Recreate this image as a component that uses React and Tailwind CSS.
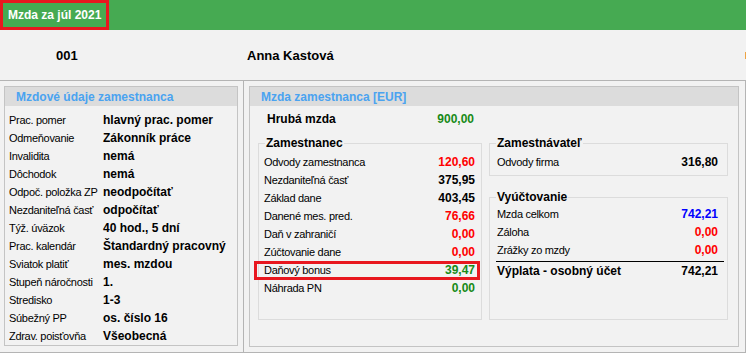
const leftRows = [
  ['Prac. pomer', 'hlavný prac. pomer'],
  ['Odmeňovanie', 'Zákonník práce'],
  ['Invalidita', 'nemá'],
  ['Dôchodok', 'nemá'],
  ['Odpoč. položka ZP', 'neodpočítať'],
  ['Nezdaniteľná časť', 'odpočítať'],
  ['Týž. úväzok', '40 hod., 5 dní'],
  ['Prac. kalendár', 'Štandardný pracovný'],
  ['Sviatok platiť', 'mes. mzdou'],
  ['Stupeň náročnosti', '1.'],
  ['Stredisko', '1-3'],
  ['Súbežný PP', 'os. číslo 16'],
  ['Zdrav. poisťovňa', 'Všeobecná'],
]

const RED = 'text-[#ff0000]'
const GREEN = 'text-[#178a17]'
const BLACK = 'text-black'

const employeeRows = [
  ['Odvody zamestnanca', '120,60', RED],
  ['Nezdaniteľná časť', '375,95', BLACK],
  ['Základ dane', '403,45', BLACK],
  ['Danené mes. pred.', '76,66', RED],
  ['Daň v zahraničí', '0,00', RED],
  ['Zúčtovanie dane', '0,00', RED],
  ['Daňový bonus', '39,47', GREEN, true],
  ['Náhrada PN', '0,00', GREEN],
]

const settleRows = [
  ['Mzda celkom', '742,21', 'text-[#0000ff]'],
  ['Záloha', '0,00', RED],
  ['Zrážky zo mzdy', '0,00', RED],
]

function Group({ title, className, children }) {
  return (
    <div className={`relative border border-[#dcdcdc] ${className}`}>
      {/* legend sits on the top border */}
      <span className="absolute -top-[8px] left-[6px] bg-[#f2f2f2] px-[1px] text-[12px] font-bold leading-[14px] text-black">
        {title}
      </span>
      {children}
    </div>
  )
}

function ValueRow({ label, value, color, highlight, pl = 'pl-[5px]', pr = 'pr-[6px]' }) {
  return (
    <div className={`relative flex h-[18px] items-center justify-between ${pl} ${pr}`}>
      <span className="text-[11px] tracking-[-0.3px] text-black">{label}</span>
      <span className={`text-[12px] font-bold ${color}`}>{value}</span>
      {highlight && (
        <div className="pointer-events-none absolute top-0 -left-[5px] h-[19px] w-[226px] border-[3px] border-[#e8171f]" />
      )}
    </div>
  )
}

export default function App() {
  return (
    <div
      className="flex h-[353px] w-[746px] flex-col overflow-hidden bg-[#f2f2f2] text-black"
      style={{ fontFamily: '"Liberation Sans", Arial, sans-serif' }}
    >
      {/* Top bar */}
      <div className="flex h-[30px] shrink-0 bg-[#46aa52]">
        <div className="flex h-[30px] w-[109px] items-center border-[3px] border-[#e8171f] pl-[5px]">
          <span className="text-[12px] font-bold text-white">Mzda za júl 2021</span>
        </div>
      </div>

      {/* Employee row */}
      <div className="flex h-[50px] shrink-0 items-center pt-[1px]">
        <div className="w-[247px] pl-[56px] text-[13px] font-bold">001</div>
        <div className="text-[13px] font-bold">Anna Kastová</div>
        <div className="ml-auto h-[7px] w-[1px] bg-[#eea444]" />
      </div>

      {/* Panels */}
      <div className="flex flex-1 border-t border-b border-[#b4b4b4]">
        {/* Left panel */}
        <div className="w-[244px] shrink-0 border-r border-[#b4b4b4] pt-[5px] pl-[4px] pr-[5px]">
          <div className="h-[260px] border border-[#c4c4c4]">
            <div className="flex h-[19px] items-center bg-[#dcdcdc] pl-[11px]">
              <span className="text-[12px] font-bold text-[#4aa3f0]">Mzdové údaje zamestnanca</span>
            </div>
            <div className="pt-[5px]">
              {leftRows.map(([label, value]) => (
                <div key={label} className="flex h-[18px] items-center pl-[4px]">
                  <span className="w-[94px] shrink-0 text-[11px] tracking-[-0.3px]">{label}</span>
                  <span className="text-[12px] font-bold">{value}</span>
                </div>
              ))}
            </div>
          </div>
        </div>

        {/* Right panel */}
        <div className="w-[502px] shrink-0 border-r border-[#b4b4b4] pt-[5px] pl-[5px] pr-[6px]">
          <div className="h-[261px] border border-[#c4c4c4]">
            <div className="flex h-[19px] items-center bg-[#dcdcdc] pl-[11px]">
              <span className="text-[12px] font-bold text-[#4aa3f0]">Mzda zamestnanca [EUR]</span>
            </div>

            <div className="mt-[4px] flex h-[18px] w-[224px] items-center justify-between pl-[17px]">
              <span className="text-[12px] font-bold">Hrubá mzda</span>
              <span className={`text-[12px] font-bold ${GREEN}`}>900,00</span>
            </div>

            <div className="mt-[15px] ml-[8px] flex gap-[7px]">
              <Group title="Zamestnanec" className="h-[177px] w-[224px] pt-[9px]">
                {employeeRows.map(([label, value, color, hl]) => (
                  <ValueRow key={label} label={label} value={value} color={color} highlight={hl} />
                ))}
              </Group>

              <div className="flex w-[239px] flex-col">
                <Group title="Zamestnávateľ" className="h-[33px] pt-[9px]">
                  <ValueRow label="Odvody firma" value="316,80" color={BLACK} pl="pl-[7px]" pr="pr-[9px]" />
                </Group>

                <Group title="Vyúčtovanie" className="mt-[21px] h-[123px] pt-[7px]">
                  {settleRows.map(([label, value, color]) => (
                    <ValueRow key={label} label={label} value={value} color={color} pl="pl-[7px]" pr="pr-[9px]" />
                  ))}
                  <div className="mt-[2px] ml-[6px] mr-[3px] border-t border-black" />
                  <div className="flex h-[18px] items-center justify-between pl-[7px] pr-[9px]">
                    <span className="text-[12px] font-bold">Výplata - osobný účet</span>
                    <span className="text-[12px] font-bold">742,21</span>
                  </div>
                </Group>
              </div>
            </div>
          </div>
        </div>
      </div>
    </div>
  )
}
